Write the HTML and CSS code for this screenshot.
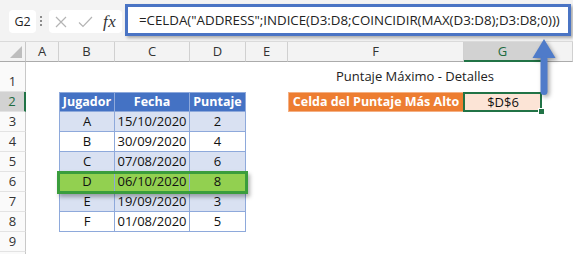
FILE: index.html
```html
<!DOCTYPE html>
<html lang="es">
<head>
    <meta charset="UTF-8">
    <meta name="viewport" content="width=device-width, initial-scale=1.0">
    <title>Puntaje Máximo - Detalles</title>
    <link rel="stylesheet" href="styles.css">
</head>
<body>

    <div class="app">
        <!-- Formula bar -->
        <div class="toolbar">
            <div class="name-box">G2</div>
            <div class="grip"><span></span><span></span><span></span></div>
            <div class="fx-box">
                <svg class="icon" width="12" height="12" viewBox="0 0 12 12">
                    <path d="M1 1 L11 11 M11 1 L1 11" stroke="#b4b4b4" stroke-width="1.2" fill="none"/>
                </svg>
                <svg class="icon" width="15" height="12" viewBox="0 0 15 12">
                    <path d="M1 6.5 L5 10.5 L14 1" stroke="#b4b4b4" stroke-width="1.2" fill="none"/>
                </svg>
                <span class="fx">fx</span>
            </div>
            <div class="formula">=CELDA("ADDRESS";INDICE(D3:D8;COINCIDIR(MAX(D3:D8);D3:D8;0)))</div>
        </div>

        <div class="sheet-wrap">
            <!-- Sheet grid -->
            <div class="sheet">
                <!-- column headers -->
                <div class="corner"><span class="corner-tri"></span></div>
                <div class="col-head">A</div>
                <div class="col-head">B</div>
                <div class="col-head">C</div>
                <div class="col-head">D</div>
                <div class="col-head">E</div>
                <div class="col-head">F</div>
                <div class="col-head active">G</div>
                <div class="col-head"></div>

                <!-- row 1 -->
                <div class="row-head">1</div>
                <div></div><div></div><div></div><div></div><div></div>
                <div class="title">Puntaje Máximo - Detalles</div>
                <div></div>

                <!-- row 2 -->
                <div class="row-head active">2</div>
                <div></div>
                <div class="t-cell t-first t-head">Jugador</div>
                <div class="t-cell t-head">Fecha</div>
                <div class="t-cell t-head">Puntaje</div>
                <div></div>
                <div class="label-cell">Celda del Puntaje Más Alto</div>
                <div class="value-cell">$D$6</div>
                <div></div>

                <!-- row 3 -->
                <div class="row-head">3</div>
                <div></div>
                <div class="t-cell t-first band">A</div>
                <div class="t-cell band">15/10/2020</div>
                <div class="t-cell band">2</div>
                <div></div><div></div><div></div><div></div>

                <!-- row 4 -->
                <div class="row-head">4</div>
                <div></div>
                <div class="t-cell t-first">B</div>
                <div class="t-cell">30/09/2020</div>
                <div class="t-cell">4</div>
                <div></div><div></div><div></div><div></div>

                <!-- row 5 -->
                <div class="row-head">5</div>
                <div></div>
                <div class="t-cell t-first band">C</div>
                <div class="t-cell band">07/08/2020</div>
                <div class="t-cell band">6</div>
                <div></div><div></div><div></div><div></div>

                <!-- row 6 -->
                <div class="row-head">6</div>
                <div></div>
                <div class="t-cell t-first best">D</div>
                <div class="t-cell best">06/10/2020</div>
                <div class="t-cell best">8</div>
                <div></div><div></div><div></div><div></div>

                <!-- row 7 -->
                <div class="row-head">7</div>
                <div></div>
                <div class="t-cell t-first band">E</div>
                <div class="t-cell band">19/09/2020</div>
                <div class="t-cell band">3</div>
                <div></div><div></div><div></div><div></div>

                <!-- row 8 -->
                <div class="row-head">8</div>
                <div></div>
                <div class="t-cell t-first">F</div>
                <div class="t-cell">01/08/2020</div>
                <div class="t-cell">5</div>
                <div></div><div></div><div></div><div></div>

                <!-- row 9 -->
                <div class="row-head">9</div>
                <div></div><div></div><div></div><div></div><div></div><div></div><div></div><div></div>

                <!-- row 10 (cut off) -->
                <div class="row-head"></div>
                <div></div><div></div><div></div><div></div><div></div><div></div><div></div><div></div>
            </div>

            <!-- highlight frames drawn over the sheet -->
            <div class="sheet overlay">
                <div class="best-frame"></div>
                <div class="selection"><span class="handle"></span></div>
            </div>
        </div>

        <!-- callout arrow -->
        <svg class="arrow" width="30" height="66" viewBox="0 0 30 66">
            <polygon points="14,3 25.5,22 2.5,22" fill="#4f7bc9"/>
            <rect x="10.5" y="20" width="7" height="39" rx="3.5" fill="#4f7bc9"/>
        </svg>
    </div>

</body>
</html>
```

FILE: styles.css
```css
body, html {
    margin: 0;
    padding: 0;
    background-color: #ffffff;
    font-family: "Open Sans", "Noto Sans", sans-serif;
}
.app {
    position: relative;
    width: 573px;
    height: 254px;
    overflow: hidden;
}

/* formula bar */
.toolbar {
    display: flex;
    align-items: flex-start;
    height: 42px;
    padding-left: 9px;
    background-color: #f3f3f3;
    border-bottom: 1px solid #dadada;
    box-sizing: border-box;
}
.name-box {
    width: 27px;
    height: 23px;
    margin-top: 10px;
    background-color: white;
    border-radius: 4px;
    font-size: 12.5px;
    line-height: 23px;
    text-align: center;
    color: #222;
}
.grip {
    display: flex;
    flex-direction: column;
    gap: 2px;
    margin: 16px 0 0 2px;
    width: 6px;
    align-items: center;
}
.grip span {
    width: 2px;
    height: 2px;
    background-color: #8c8c8c;
}
.fx-box {
    display: flex;
    align-items: center;
    width: 73px;
    height: 23px;
    margin: 10px 0 0 5px;
    padding-left: 6px;
    box-sizing: border-box;
    background-color: white;
    border-radius: 4px;
}
.fx-box .icon {
    margin-right: 11px;
}
.fx-box .icon + .icon {
    margin-right: 10px;
}
.fx {
    font-family: "Liberation Serif", "DejaVu Serif", serif;
    font-style: italic;
    font-size: 17px;
    color: #333;
    letter-spacing: 0.5px;
}
.formula {
    flex: 1;
    height: 32px;
    margin: 4px 2px 0 3px;
    padding-left: 11px;
    box-sizing: border-box;
    background-color: white;
    border: 3px solid #4a74c4;
    box-shadow: 2px 2px 3px rgba(0, 0, 0, 0.3);
    font-size: 13.3px;
    line-height: 26px;
    color: #222;
    white-space: nowrap;
}

/* sheet */
.sheet-wrap {
    position: relative;
}
.sheet {
    display: grid;
    grid-template-columns: 26px 33px 56px 75px 56px 42px 176px 78px 1fr;
    grid-template-rows: 20px 30px repeat(9, 20px);
    font-size: 13px;
}
.overlay {
    position: absolute;
    top: 0;
    left: 0;
    right: 0;
    bottom: 0;
    pointer-events: none;
}
.corner {
    background-color: #f3f3f3;
    border-right: 1px solid #c8c8c8;
    border-bottom: 1px solid #ababab;
    position: relative;
}
.corner-tri {
    position: absolute;
    right: 3px;
    bottom: 3px;
    width: 0;
    height: 0;
    border-left: 12px solid transparent;
    border-bottom: 12px solid #bdbdbd;
}
.col-head {
    background-color: #f3f3f3;
    border-right: 1px solid #d0d0d0;
    border-bottom: 1px solid #ababab;
    text-align: center;
    line-height: 19px;
    color: #333;
}
.col-head.active {
    background-color: #d2d2d2;
    border-bottom: 2px solid #217346;
    color: #1e6b40;
}
.row-head {
    background-color: #fafafa;
    border-right: 1px solid #c8c8c8;
    border-bottom: 1px solid #e3e3e3;
    display: flex;
    align-items: flex-end;
    justify-content: center;
    padding-bottom: 1px;
    line-height: 18px;
    color: #333;
}
.row-head.active {
    background-color: #d2d2d2;
    border-right: 2px solid #217346;
    color: #1e6b40;
}

.title {
    grid-column: span 2;
    text-align: center;
    align-self: end;
    padding-bottom: 7px;
    color: #222;
}

/* table */
.t-cell {
    border-right: 1px solid #8ea9db;
    border-bottom: 1px solid #8ea9db;
    text-align: center;
    line-height: 19px;
    color: #111;
}
.t-first {
    border-left: 1px solid #8ea9db;
}
.t-head {
    border-top: 1px solid #8ea9db;
    background-color: #4472c4;
    color: white;
    font-weight: bold;
    font-size: 12.5px;
    line-height: 18px;
}
.band {
    background-color: #d9e1f2;
}
.best {
    background-color: #92d050;
}
.best-frame {
    grid-column: 3 / 6;
    grid-row: 7;
    margin: -1px -2px -2px -2px;
    border: 3px solid #3a9d3c;
    box-shadow: 2px 3px 4px rgba(0, 0, 0, 0.3);
}

.label-cell {
    background-color: #ed7d31;
    border: 1px solid #f4b084;
    color: white;
    font-weight: bold;
    font-size: 12.5px;
    text-align: center;
    line-height: 18px;
}
.value-cell {
    background-color: #fce4d6;
    text-align: center;
    line-height: 20px;
    color: #111;
}
.selection {
    grid-column: 8;
    grid-row: 3;
    margin-left: -1px;
    border: 2px solid #217346;
    position: relative;
}
.handle {
    position: absolute;
    right: -5px;
    bottom: -5px;
    width: 5px;
    height: 5px;
    background-color: #217346;
    border: 1px solid white;
}

/* callout arrow */
.arrow {
    position: absolute;
    left: 530px;
    top: 36px;
    filter: drop-shadow(2px 2px 2px rgba(0, 0, 0, 0.35));
}
```
